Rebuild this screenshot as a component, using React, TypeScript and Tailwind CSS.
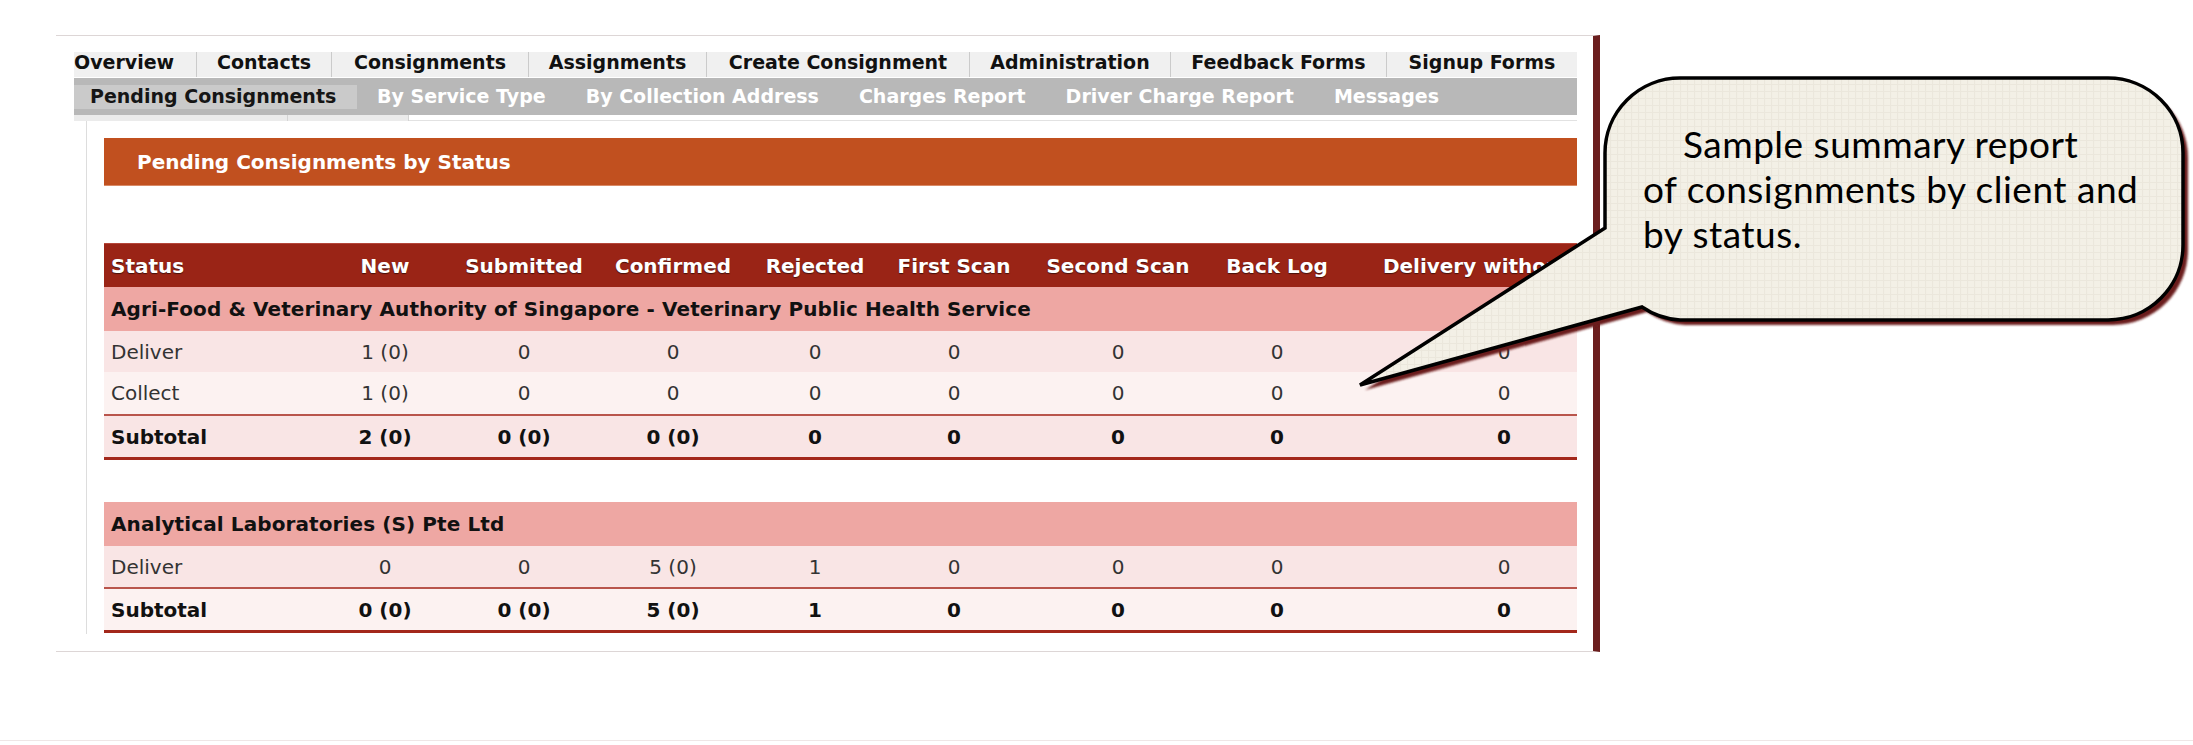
import React from 'react';

const tabs = [
  { name: 'Overview', w: 'w-[122px] text-left' },
  { name: 'Contacts', w: 'w-[135px] text-center border-l' },
  { name: 'Consignments', w: 'w-[197px] text-center border-l' },
  { name: 'Assignments', w: 'w-[178px] text-center border-l' },
  { name: 'Create Consignment', w: 'w-[263px] text-center border-l' },
  { name: 'Administration', w: 'w-[201px] text-center border-l' },
  { name: 'Feedback Forms', w: 'w-[216px] text-center border-l' },
  { name: 'Signup Forms', w: 'w-[191px] text-center border-l' },
];

const subTabs = ['By Service Type', 'By Collection Address', 'Charges Report', 'Driver Charge Report', 'Messages'];

const headers = ['New', 'Submitted', 'Confirmed', 'Rejected', 'First Scan', 'Second Scan', 'Back Log'];

const cols = 'grid grid-cols-[226px_110px_168px_130px_154px_124px_204px_114px_97px_146px]';

type Row = { label: string; values: string[]; total?: boolean };

const groups: { client: string; header: boolean; rows: Row[] }[] = [
  {
    client: 'Agri-Food & Veterinary Authority of Singapore - Veterinary Public Health Service',
    header: true,
    rows: [
      { label: 'Deliver', values: ['1 (0)', '0', '0', '0', '0', '0', '0', '0'] },
      { label: 'Collect', values: ['1 (0)', '0', '0', '0', '0', '0', '0', '0'] },
      { label: 'Subtotal', values: ['2 (0)', '0 (0)', '0 (0)', '0', '0', '0', '0', '0'], total: true },
    ],
  },
  {
    client: 'Analytical Laboratories (S) Pte Ltd',
    header: false,
    rows: [
      { label: 'Deliver', values: ['0', '0', '5 (0)', '1', '0', '0', '0', '0'] },
      { label: 'Subtotal', values: ['0 (0)', '0 (0)', '5 (0)', '1', '0', '0', '0', '0'], total: true },
    ],
  },
];

function Cell({ children }: { children: React.ReactNode }) {
  return <div className="flex items-center justify-center whitespace-nowrap">{children}</div>;
}

function DataRow({ row, index, height }: { row: Row; index: number; height: string }) {
  const bg = index % 2 === 0 ? 'bg-[#f9e5e5]' : 'bg-[#fcf2f1]';
  const weight = row.total ? 'font-bold text-[#111]' : 'text-[#333]';
  return (
    <div className={`${cols} ${height} ${bg} ${weight} text-[20px]`}>
      <div className="flex items-center pl-[7px]">{row.label}</div>
      {row.values.slice(0, 7).map((v, i) => (
        <Cell key={i}>{v}</Cell>
      ))}
      <div />
      <Cell>{row.values[7]}</Cell>
    </div>
  );
}

function Group({ group }: { group: (typeof groups)[number] }) {
  const body = group.rows.filter((r) => !r.total);
  const total = group.rows.find((r) => r.total)!;
  return (
    <div className="w-[1473px]">
      {group.header && (
        <div className={`${cols} h-[44px] border-t border-[#b5463a] bg-[#9a2416] text-[20px] font-bold text-white [text-shadow:0_1px_1px_rgba(0,0,0,0.55)]`}>
          <div className="flex items-center pl-[7px]">Status</div>
          {headers.map((h) => (
            <Cell key={h}>{h}</Cell>
          ))}
          <div />
          <Cell>Delivery without POD</Cell>
        </div>
      )}
      <div className="flex h-[44px] items-center bg-[#eea7a3] pl-[7px] text-[20px] font-bold tracking-[0.1px] text-[#111]">
        {group.client}
      </div>
      {body.map((r, i) => (
        <DataRow key={r.label} row={r} index={i} height={i === 1 ? 'h-[42px]' : 'h-[41px]'} />
      ))}
      <div className="h-[2px] bg-[#b9554c]" />
      <DataRow row={total} index={body.length} height="h-[41px]" />
      <div className="h-[3px] bg-[#a3281b]" />
    </div>
  );
}

function Callout() {
  const d =
    'M 1642 307 A 75 75 0 0 0 1680 320 L 2108 320 A 75 75 0 0 0 2183 245 L 2183 153 A 75 75 0 0 0 2108 78 L 1680 78 A 75 75 0 0 0 1605 153 L 1605 228 L 1360 385 Z';
  return (
    <>
      <svg className="pointer-events-none absolute left-0 top-0" width="2193" height="745" viewBox="0 0 2193 745">
        <defs>
          <pattern id="weave" width="7" height="7" patternUnits="userSpaceOnUse">
            <rect width="7" height="7" fill="#f3f0e6" />
            <path d="M0 0.5 H7 M0.5 0 V7" stroke="#ebe7dc" strokeWidth="1.2" />
          </pattern>
          <filter id="soft" x="-5%" y="-5%" width="110%" height="110%">
            <feGaussianBlur stdDeviation="1.2" />
          </filter>
        </defs>
        <path d={d} transform="translate(5 5)" fill="#6b1e1e" filter="url(#soft)" />
        <path d={d} fill="url(#weave)" stroke="#000" strokeWidth="3.5" strokeLinejoin="miter" />
      </svg>
      <div className="absolute left-[1643px] top-[121px] font-['Lato',sans-serif] text-[37px] leading-[45px] tracking-[0.5px] text-black">
        <div className="pl-[40px]">Sample summary report</div>
        <div>of consignments by client and</div>
        <div>by status.</div>
      </div>
    </>
  );
}

export default function App() {
  return (
    <div className="relative h-[745px] w-[2193px] overflow-hidden bg-white font-['DejaVu_Sans',sans-serif]">
      <div className="pl-[56px] pt-[35px]">
        <div className="h-[617px] w-[1544px] border-y border-r-[7px] border-y-[#ddd6d6] border-r-[#6b1e1e]">
          <div className="pl-[18px] pt-[16px]">
            <div className="flex h-[25px] w-[1503px] bg-[#f0f0f0] text-[19px] font-bold leading-[20px] text-[#111]">
              {tabs.map((t) => (
                <div key={t.name} className={`${t.w} whitespace-nowrap border-[#cbcbcb]`}>
                  {t.name}
                </div>
              ))}
            </div>
            <div className="mt-px flex h-[37px] w-[1503px] items-center bg-[#b8b8b8] text-[19px] font-bold">
              <div className="flex h-[24px] w-[283px] items-center bg-[#cacaca] pl-[16px] text-[#151515]">
                Pending Consignments
              </div>
              {subTabs.map((s) => (
                <div key={s} className="whitespace-nowrap px-5 text-white">
                  {s}
                </div>
              ))}
            </div>
            <div className="flex h-[6px] w-[1503px]">
              <div className="w-[214px] border-r border-[#d4d4d4] bg-[#ebebeb]" />
              <div className="w-[121px] border-r border-[#d4d4d4] bg-[#ebebeb]" />
              <div className="flex-1 border-b border-[#e2e2e2]" />
            </div>
            <div className="ml-[12px] h-[513px] w-[1491px] border-l border-[#dddddd] pl-[17px] pt-[17px]">
              <div className="flex h-[48px] w-[1473px] items-center border-b border-[#d98a66] bg-[#c1501f] pl-[33px] text-[20px] font-bold text-white">
                Pending Consignments by Status
              </div>
              <div className="mt-[57px]">
                <Group group={groups[0]} />
              </div>
              <div className="mt-[42px]">
                <Group group={groups[1]} />
              </div>
            </div>
          </div>
        </div>
      </div>
      <div className="mt-[88px] h-px w-full bg-[#efe6e6]" />
      <Callout />
    </div>
  );
}
